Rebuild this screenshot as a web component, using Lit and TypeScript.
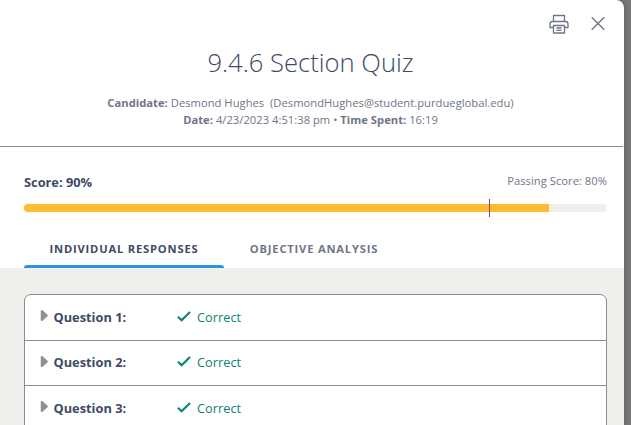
import { LitElement, html, css } from "lit";
import { customElement, property } from "lit/decorators.js";

@customElement("score-bar")
class ScoreBar extends LitElement {
  @property({ type: Number }) score = 0;
  @property({ type: Number }) passing = 0;

  static styles = css`
    :host { display: block; }
    .labels { display: flex; justify-content: space-between; height: 31px; color: #404a64; }
    .score { font-size: 12.8px; font-weight: 700; line-height: 18px; }
    .passing { font-size: 11.2px; line-height: 16px; letter-spacing: 0.03px; color: #6f7589; }
    .track { position: relative; height: 8px; border-radius: 4px; background: #f0efeb; }
    .fill { height: 8px; border-radius: 4px 0 0 4px; background: #ffbc33; }
    .mark { position: absolute; top: -5px; width: 1px; height: 18px; margin-left: -1px; background: #5d606c; }
  `;

  render() {
    return html`
      <div class="labels">
        <span class="score">Score: ${this.score}%</span>
        <span class="passing">Passing Score: ${this.passing}%</span>
      </div>
      <div class="track">
        <div class="fill" style="width:${this.score}%"></div>
        <div class="mark" style="left:${this.passing}%"></div>
      </div>
    `;
  }
}

@customElement("question-row")
class QuestionRow extends LitElement {
  @property({ type: Number }) number = 1;

  static styles = css`
    :host { display: flex; align-items: center; box-sizing: border-box; height: 45.5px; padding: 0 0 0.6px 15px; border-bottom: 1px solid #8a8c96; font-size: 12.8px; line-height: 18px; }
    .arrow { width: 8px; height: 11px; margin: -2px 5.5px 0 0; }
    .name { width: 123.5px; font-weight: 700; color: #404a64; }
    .check { width: 14px; height: 11px; margin: -1px 6px 0 0; }
    .result { color: #0c8378; }
  `;

  render() {
    return html`
      <svg class="arrow" viewBox="0 0 8 11"><path d="M1 .5h1.6L7.5 5v1L2.6 10.5H1z" fill="#8c8e97" stroke="#8c8e97" stroke-width=".5"/></svg>
      <span class="name">Question ${this.number}:</span>
      <svg class="check" viewBox="0 0 14 11"><path d="M1 5.8L4.6 9.2L13 1" fill="none" stroke="#0c8378" stroke-width="2.2"/></svg>
      <span class="result">Correct</span>
    `;
  }
}

@customElement("app-root")
class AppRoot extends LitElement {
  static styles = css`
    :host { display: block; height: 425px; overflow: hidden; background: #777; font-family: "Open Sans", "Noto Sans", sans-serif; }
    .dialog { width: 624px; height: 425px; border-radius: 0 8px 0 0; background: #fff; box-shadow: 0 0 5px rgba(0, 0, 0, 0.25); display: flex; flex-direction: column; overflow: hidden; }
    header { height: 146px; flex: none; width: 621px; padding-right: 2px; border-bottom: 1px solid #8a8c96; color: #6f7589; }
    .actions { display: flex; justify-content: flex-end; gap: 21px; height: 45px; padding: 14px 15px 0 0; box-sizing: border-box; }
    .print { width: 20px; height: 20px; }
    .close { width: 16px; height: 16px; margin-top: 1px; }
    h1 { margin: 0; text-align: center; font-size: 25.6px; font-weight: 300; line-height: 36px; color: #404a64; }
    .meta { margin-top: 13px; text-align: center; font-size: 11.2px; letter-spacing: 0.025px; line-height: 17px; white-space: pre; }
    .meta.date { margin-top: 0; }
    .body { flex: none; padding: 26px 17px 0 24px; }
    nav { display: flex; margin-top: 18px; height: 38px; font-size: 11.2px; font-weight: 700; letter-spacing: 0.8px; }
    .tab { width: 200px; height: 38px; box-sizing: border-box; padding-top: 10px; line-height: 17px; text-align: center; color: #6f7589; }
    .tab.second { width: 180px; }
    .tab.active { color: #404a64; display: flex; flex-direction: column; justify-content: space-between; }
    .underline { height: 3px; border-radius: 3px 3px 0 0; background: #2c93e5; }
    .panel { flex: 1; background: #f0efeb; padding: 26px 17px 0 24px; }
    .list { border: 1px solid #8a8c96; border-radius: 7px; background: #fff; }
  `;

  render() {
    return html`
      <div class="dialog">
        <header>
          <div class="actions">
            <svg class="print" viewBox="0 0 20 20" fill="none" stroke="#6f7589" stroke-width="1.3" stroke-linejoin="round">
              <path d="M4.5 7.5V1.5H15.5V7.5M4.5 13.5H1V10Q1 7.5 3.5 7.5H16.5Q19 7.5 19 10V13.5H15.5M4.5 11.5H15.5V19H4.5ZM7.5 14H12.5M7.5 16.3H12.5"/>
            </svg>
            <svg class="close" viewBox="0 0 16 16"><path d="M1.7 2.2L14.3 14.8M14.3 2.2L1.7 14.8" stroke="#6f7589" stroke-width="1.4"/></svg>
          </div>
          <h1>9.4.6 Section Quiz</h1>
          <div class="meta"><b>Candidate:</b> Desmond Hughes  (DesmondHughes@student.purdueglobal.edu)</div>
          <div class="meta date"><b>Date:</b> 4/23/2023 4:51:38 pm • <b>Time Spent:</b> 16:19</div>
        </header>
        <div class="body">
          <score-bar .score=${90} .passing=${80}></score-bar>
          <nav>
            <div class="tab active"><span>INDIVIDUAL RESPONSES</span><div class="underline"></div></div>
            <div class="tab second">OBJECTIVE ANALYSIS</div>
          </nav>
        </div>
        <div class="panel">
          <div class="list">
            ${[1, 2, 3].map((n) => html`<question-row .number=${n}></question-row>`)}
          </div>
        </div>
      </div>
    `;
  }
}
